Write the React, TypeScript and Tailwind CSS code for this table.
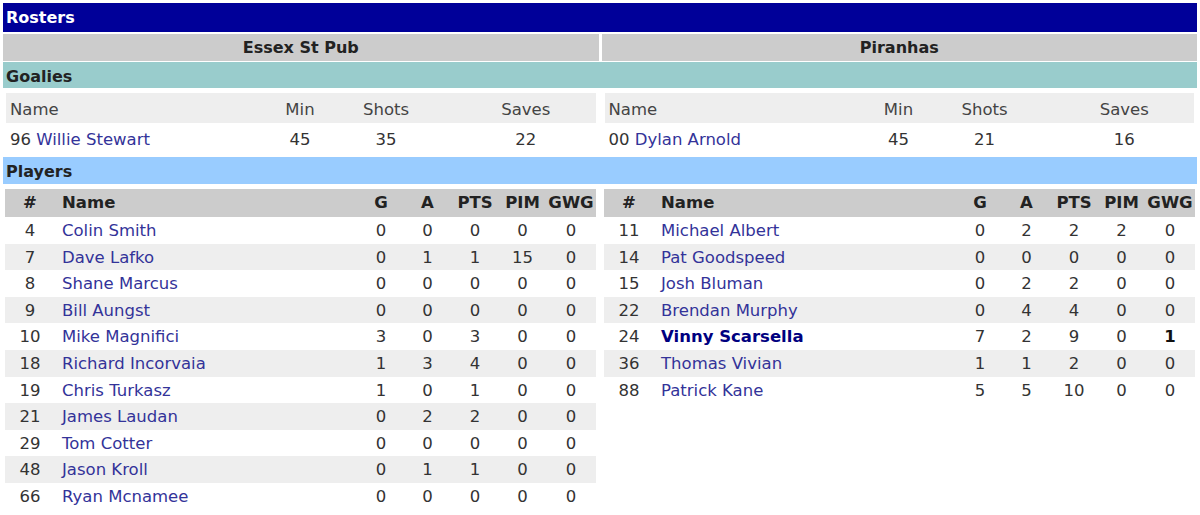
type Player = {
  num: string;
  name: string;
  g: number;
  a: number;
  pts: number;
  pim: number;
  gwg: number;
  star?: boolean;
};

type Goalie = { num: string; name: string; min: number; shots: number; saves: number };

const homePlayers: Player[] = [
  { num: '4', name: 'Colin Smith', g: 0, a: 0, pts: 0, pim: 0, gwg: 0 },
  { num: '7', name: 'Dave Lafko', g: 0, a: 1, pts: 1, pim: 15, gwg: 0 },
  { num: '8', name: 'Shane Marcus', g: 0, a: 0, pts: 0, pim: 0, gwg: 0 },
  { num: '9', name: 'Bill Aungst', g: 0, a: 0, pts: 0, pim: 0, gwg: 0 },
  { num: '10', name: 'Mike Magnifici', g: 3, a: 0, pts: 3, pim: 0, gwg: 0 },
  { num: '18', name: 'Richard Incorvaia', g: 1, a: 3, pts: 4, pim: 0, gwg: 0 },
  { num: '19', name: 'Chris Turkasz', g: 1, a: 0, pts: 1, pim: 0, gwg: 0 },
  { num: '21', name: 'James Laudan', g: 0, a: 2, pts: 2, pim: 0, gwg: 0 },
  { num: '29', name: 'Tom Cotter', g: 0, a: 0, pts: 0, pim: 0, gwg: 0 },
  { num: '48', name: 'Jason Kroll', g: 0, a: 1, pts: 1, pim: 0, gwg: 0 },
  { num: '66', name: 'Ryan Mcnamee', g: 0, a: 0, pts: 0, pim: 0, gwg: 0 },
];

const awayPlayers: Player[] = [
  { num: '11', name: 'Michael Albert', g: 0, a: 2, pts: 2, pim: 2, gwg: 0 },
  { num: '14', name: 'Pat Goodspeed', g: 0, a: 0, pts: 0, pim: 0, gwg: 0 },
  { num: '15', name: 'Josh Bluman', g: 0, a: 2, pts: 2, pim: 0, gwg: 0 },
  { num: '22', name: 'Brendan Murphy', g: 0, a: 4, pts: 4, pim: 0, gwg: 0 },
  { num: '24', name: 'Vinny Scarsella', g: 7, a: 2, pts: 9, pim: 0, gwg: 1, star: true },
  { num: '36', name: 'Thomas Vivian', g: 1, a: 1, pts: 2, pim: 0, gwg: 0 },
  { num: '88', name: 'Patrick Kane', g: 5, a: 5, pts: 10, pim: 0, gwg: 0 },
];

const cols = 'grid grid-cols-[50px_1fr_46px_47px_48px_47px_50px]';
const goalieCols = 'grid grid-cols-[264px_60px_112px_1fr]';

function GoalieTable({ goalie }: { goalie: Goalie }) {
  return (
    <div className="flex-1">
      <div className={`${goalieCols} h-[30px] items-center bg-[#eeeeee] pt-[4px] text-[#444]`}>
        <div className="pl-[4px]">Name</div>
        <div className="text-center">Min</div>
        <div className="text-center">Shots</div>
        <div className="pl-[14px] text-center">Saves</div>
      </div>
      <div className={`${goalieCols} h-[30px] items-center pt-[4px]`}>
        <div className="pl-[4px]">
          {goalie.num} <span className="text-[#333399]">{goalie.name}</span>
        </div>
        <div className="text-center">{goalie.min}</div>
        <div className="text-center">{goalie.shots}</div>
        <div className="pl-[14px] text-center">{goalie.saves}</div>
      </div>
    </div>
  );
}

function PlayerTable({ players }: { players: Player[] }) {
  return (
    <div className="flex-1">
      <div className={`${cols} h-[28px] items-center bg-[#cccccc] pt-[1px] font-bold text-[#222]`}>
        <div className="text-center">#</div>
        <div className="pl-[7px]">Name</div>
        <div className="text-center">G</div>
        <div className="text-center">A</div>
        <div className="text-center">PTS</div>
        <div className="text-center">PIM</div>
        <div className="text-center">GWG</div>
      </div>
      {players.map((p, i) => (
        <div
          key={p.num}
          className={`${cols} h-[26.6px] items-center pt-[2px] ${i % 2 === 1 ? 'bg-[#eeeeee]' : 'bg-white'}`}
        >
          <div className="text-center">{p.num}</div>
          <div className={`pl-[7px] ${p.star ? 'font-bold text-[#000080]' : 'text-[#333399]'}`}>
            {p.name}
          </div>
          <div className="text-center">{p.g}</div>
          <div className="text-center">{p.a}</div>
          <div className="text-center">{p.pts}</div>
          <div className="text-center">{p.pim}</div>
          <div className={`text-center ${p.gwg > 0 ? 'font-bold text-[#111]' : ''}`}>{p.gwg}</div>
        </div>
      ))}
    </div>
  );
}

export default function App() {
  return (
    <div className="min-h-[515px] w-[1200px] bg-white px-[3px] pt-[3px] font-['DejaVu_Sans',Verdana,sans-serif] text-[16.5px] leading-none text-[#333]">
      <div className="flex h-[29px] items-center bg-[#000099] pl-[3px] text-[16px] font-bold text-white">Rosters</div>

      <div className="mt-[2px] flex h-[27px] gap-[3px] text-[16px] font-bold text-[#222]">
        <div className="flex flex-1 items-center justify-center bg-[#cccccc]">Essex St Pub</div>
        <div className="flex flex-1 items-center justify-center bg-[#cccccc]">Piranhas</div>
      </div>

      <div className="mt-px flex h-[26px] items-center bg-[#99cccc] pl-[3px] pt-[3px] text-[16px] font-bold text-[#222]">
        Goalies
      </div>

      <div className="mt-[5px] flex gap-[9px] px-[3px]">
        <GoalieTable goalie={{ num: '96', name: 'Willie Stewart', min: 45, shots: 35, saves: 22 }} />
        <GoalieTable goalie={{ num: '00', name: 'Dylan Arnold', min: 45, shots: 21, saves: 16 }} />
      </div>

      <div className="mt-[4px] flex h-[27px] items-center bg-[#99ccff] pl-[3px] pt-[3px] text-[16px] font-bold text-[#222]">
        Players
      </div>

      <div className="mt-[5px] flex items-start gap-[8px] px-[2px]">
        <PlayerTable players={homePlayers} />
        <PlayerTable players={awayPlayers} />
      </div>
    </div>
  );
}
